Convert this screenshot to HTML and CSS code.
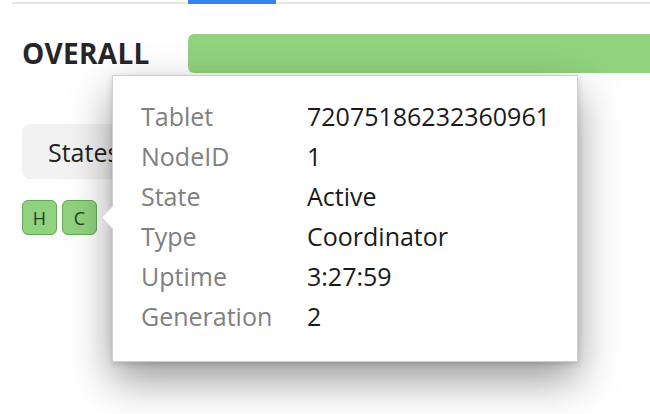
FILE: index.html
```html
<!DOCTYPE html>
<html lang="en">
<head>
<meta charset="utf-8">
<title>Overall</title>
<link rel="stylesheet" href="styles.css">
</head>
<body>
<div class="page">
  <div class="tabs"><div class="tab-active"></div></div>
  <div class="overall">
    <div class="overall-title">OVERALL</div>
    <div class="overall-bar"></div>
  </div>
  <div class="states-btn">States</div>
  <div class="badges">
    <div class="badge">H</div>
    <div class="badge">C</div>
  </div>
  <div class="tooltip">
    <div class="tooltip-arrow"></div>
    <div class="info">
      <div class="label">Tablet</div><div class="value">72075186232360961</div>
      <div class="label">NodeID</div><div class="value">1</div>
      <div class="label">State</div><div class="value">Active</div>
      <div class="label">Type</div><div class="value">Coordinator</div>
      <div class="label">Uptime</div><div class="value">3:27:59</div>
      <div class="label">Generation</div><div class="value">2</div>
    </div>
  </div>
</div>
</body>
</html>
```
FILE: styles.css
```css
html, body {
  margin: 0;
  padding: 0;
  background: #fff;
}
body {
  font-family: "Open Sans", "Noto Sans", sans-serif;
  color: #1f1f1f;
  width: 650px;
  height: 414px;
  overflow: hidden;
}
.page {
  position: relative;
  height: 414px;
}
.tabs {
  display: flex;
  height: 4px;
  margin-left: 12px;
  background: linear-gradient(to bottom, transparent 2px, #e6e6e6 2px);
}
.tab-active {
  margin-left: 176px;
  width: 88px;
  background: #3a82ef;
}
.overall {
  display: flex;
  align-items: center;
  margin-top: 30px;
  padding-left: 22px;
}
.overall-title {
  width: 166px;
  font-size: 28px;
  font-weight: 700;
  letter-spacing: 0.3px;
  color: #262626;
  line-height: 39px;
}
.overall-bar {
  flex: 1;
  height: 39px;
  background: #90d27e;
  border-radius: 6px 0 0 6px;
}
.states-btn {
  margin: 51px 0 0 22px;
  width: 130px;
  height: 55px;
  box-sizing: border-box;
  padding-left: 26px;
  display: flex;
  align-items: center;
  background: #f2f2f2;
  border-radius: 8px;
  font-size: 25px;
  color: #222;
}
.badges {
  display: flex;
  gap: 5px;
  margin: 21px 0 0 22px;
}
.badge {
  width: 35px;
  height: 35px;
  box-sizing: border-box;
  border: 1px solid #62a955;
  border-radius: 6px;
  background: #90d27e;
  display: flex;
  align-items: center;
  justify-content: center;
  font-size: 18px;
  color: #2c3a28;
}
.tooltip {
  position: absolute;
  left: 112px;
  top: 75px;
  width: 466px;
  height: 287px;
  box-sizing: border-box;
  background: #fff;
  border: 1px solid #cfcfcf;
  box-shadow: 0 18px 40px rgba(0, 0, 0, 0.4), 0 2px 6px rgba(0, 0, 0, 0.15);
  padding: 20px 0 0 28px;
}
.tooltip-arrow {
  position: absolute;
  left: -9px;
  top: 133px;
  width: 16px;
  height: 16px;
  background: #fff;
  border-left: 1px solid #cfcfcf;
  border-bottom: 1px solid #cfcfcf;
  transform: rotate(45deg);
}
.info {
  display: grid;
  grid-template-columns: 166px auto;
  grid-auto-rows: 40px;
  align-items: center;
  font-size: 25px;
}
.label {
  color: #808080;
}
.value {
  color: #1a1a1a;
}
```
